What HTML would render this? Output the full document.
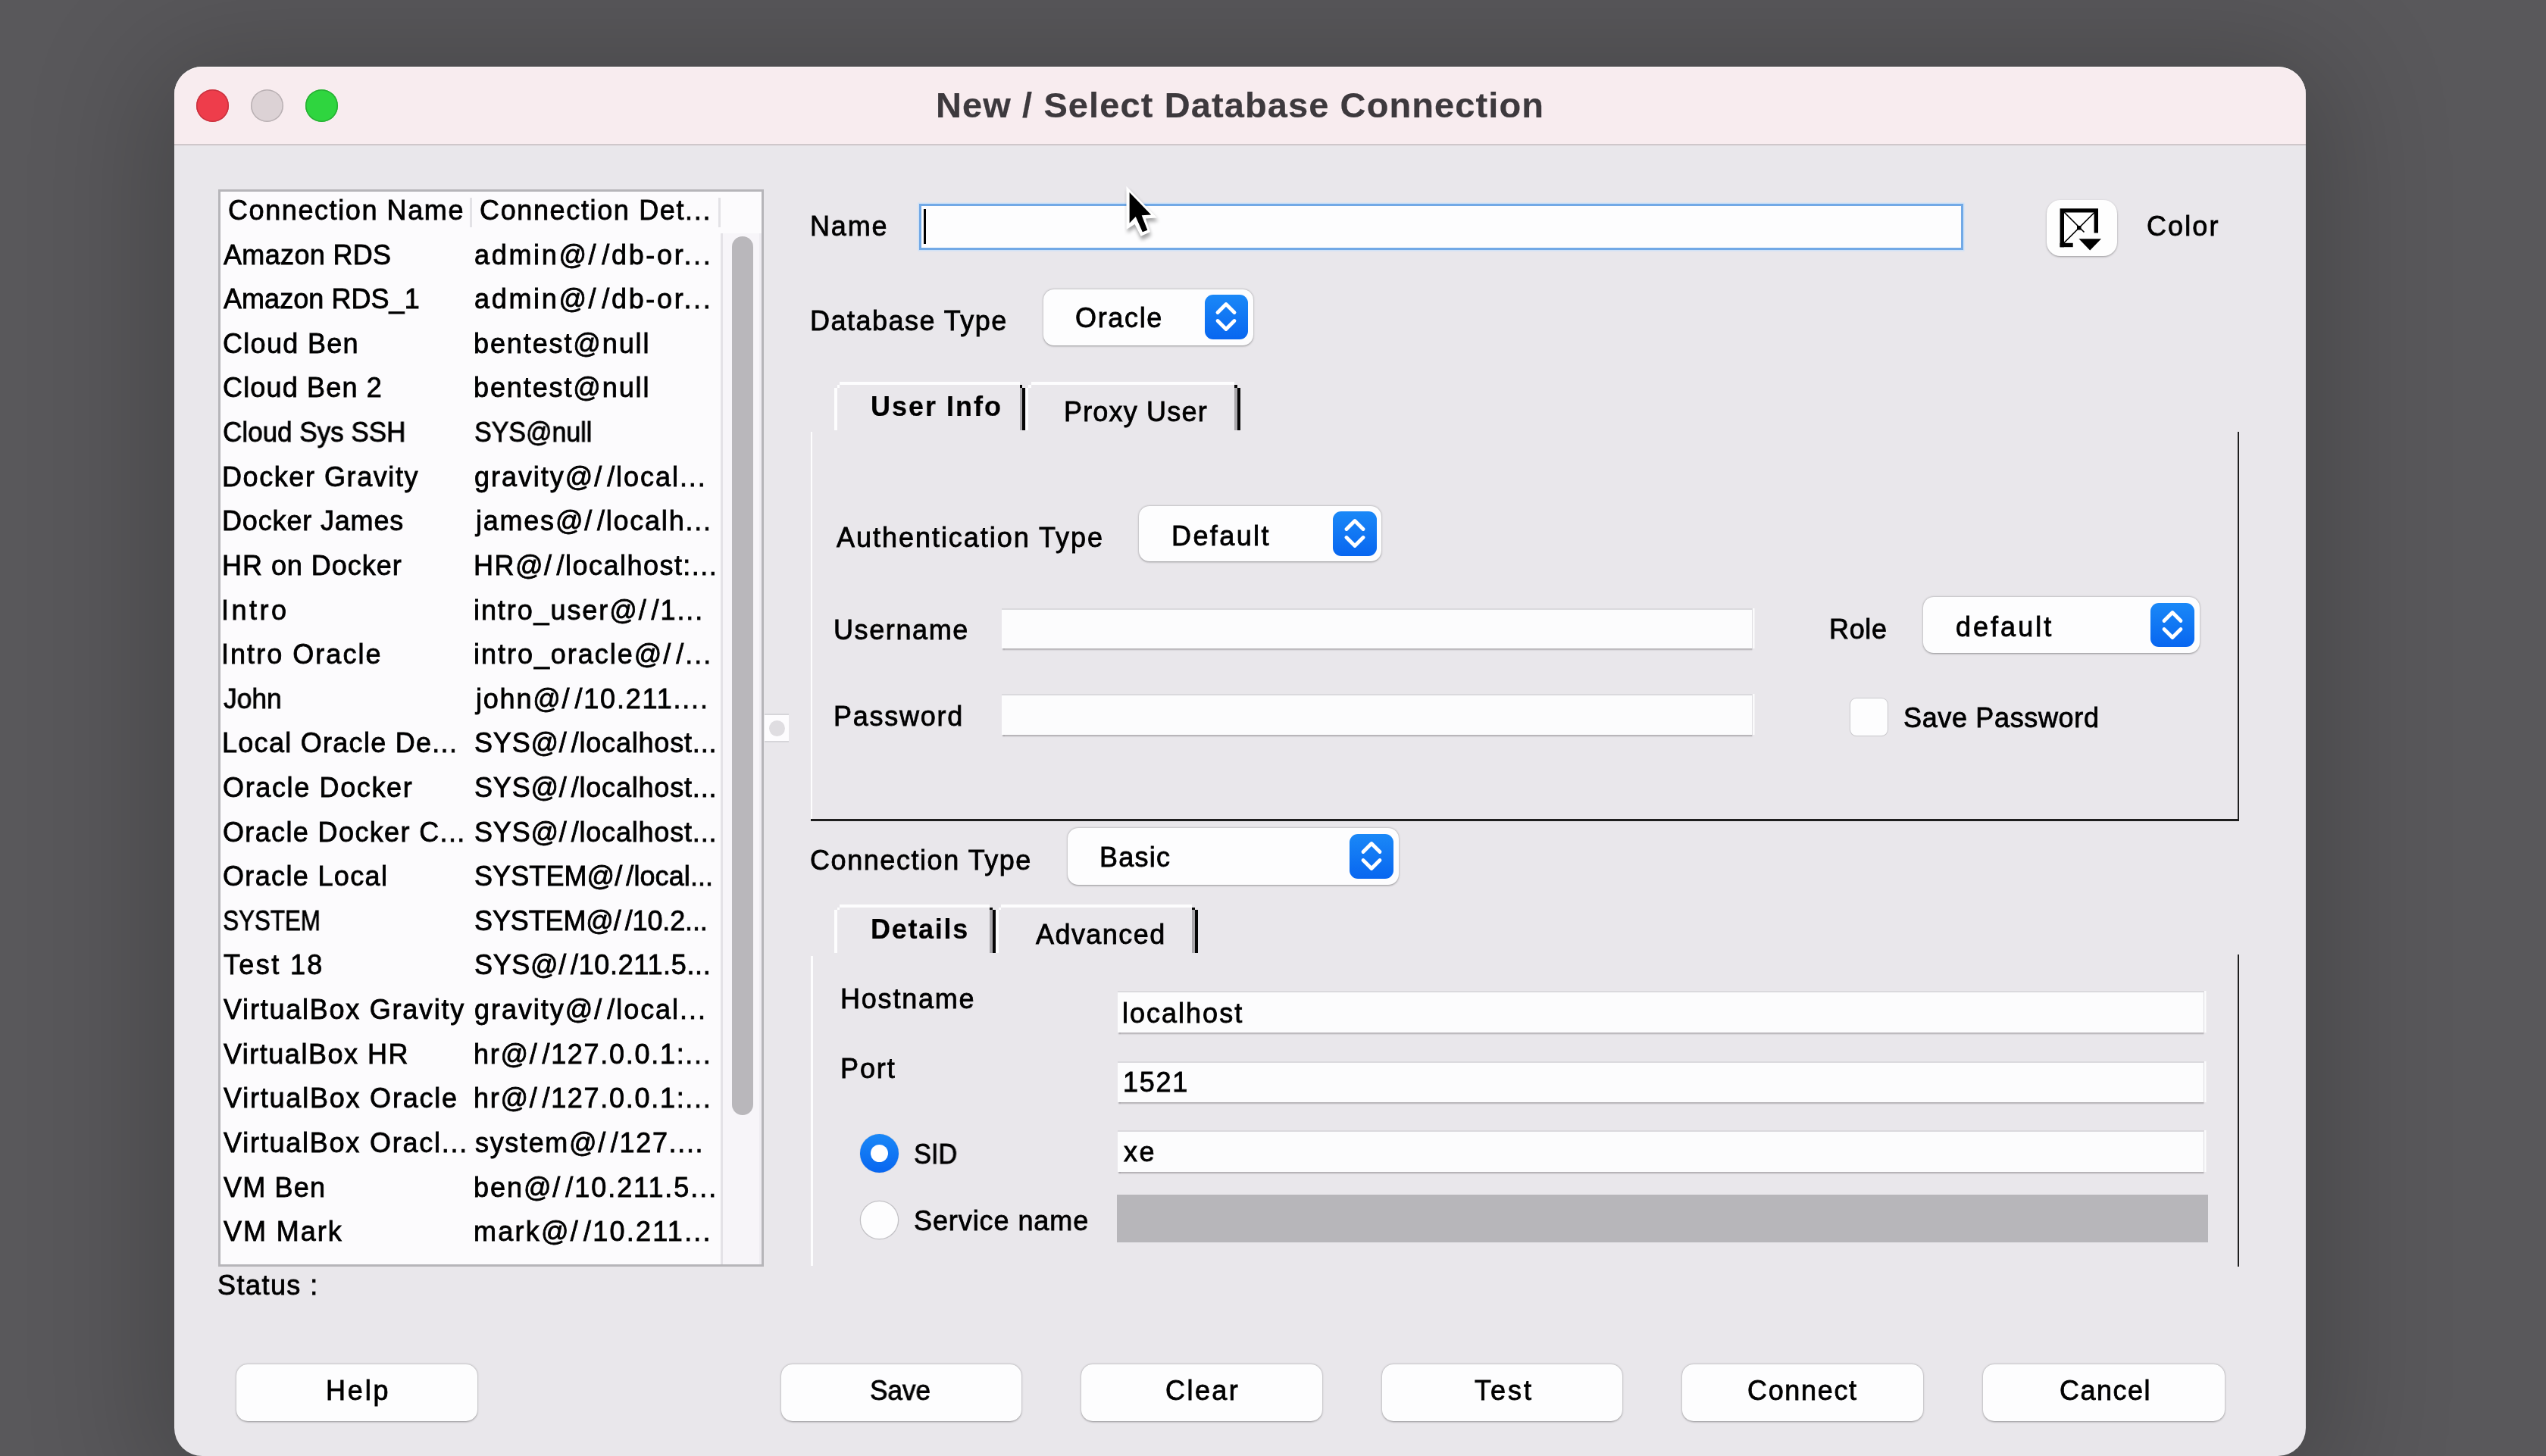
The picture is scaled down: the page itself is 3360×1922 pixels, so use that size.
<!DOCTYPE html>
<html><head><meta charset="utf-8"><style>
html,body{margin:0;padding:0;}
body{width:3360px;height:1922px;overflow:hidden;position:relative;background:#4e4d50;font-family:"Liberation Sans",sans-serif;}
.a{position:absolute;}
.t{position:absolute;white-space:nowrap;line-height:1;color:#000;-webkit-font-smoothing:antialiased;will-change:transform;-webkit-text-stroke:0.8px currentColor;}
</style></head><body>
<div class="a" style="left:0;top:0;width:3360px;height:1922px;background:#59585b;"></div>
<div class="a" style="left:230.0px;top:88.0px;width:2813.0px;height:1834.0px;background:#e9e7eb;border-radius:37px;overflow:hidden;box-shadow:0 20px 160px 40px rgba(0,0,0,0.2);"></div>
<div class="a" style="left:230px;top:88px;width:2813px;height:103px;background:#f8ecef;border-radius:37px 37px 0 0;border-top:1px solid #fdf8f9;box-sizing:border-box;"></div>
<div class="a" style="left:230.0px;top:190.0px;width:2813.0px;height:2.0px;background:#cfc7ca;"></div>
<div class="a" style="left:258.5px;top:117.5px;width:43.0px;height:43.0px;background:#ee3d4b;border-radius:50%;box-shadow:inset 0 0 0 1.5px #c7323e;"></div>
<div class="a" style="left:330.5px;top:117.5px;width:43.0px;height:43.0px;background:#dcd2d5;border-radius:50%;box-shadow:inset 0 0 0 1.5px #b9b0b3;"></div>
<div class="a" style="left:402.5px;top:117.5px;width:43.0px;height:43.0px;background:#2fd53f;border-radius:50%;box-shadow:inset 0 0 0 1.5px #27ad33;"></div>
<div class="t" style="left:1234.9px;top:115.2px;font-size:47px;font-weight:bold;-webkit-text-stroke:0.2px currentColor;letter-spacing:1.10px;color:#3d393d;">New / Select Database Connection</div>
<div class="a" style="left:288.0px;top:250.0px;width:720.0px;height:1422.0px;background:#fcfbfd;border:3px solid #b6b5b9;box-sizing:border-box;"></div>
<div class="a" style="left:620.0px;top:261.0px;width:3.0px;height:39.0px;background:#e3e2e6;"></div>
<div class="a" style="left:947.5px;top:261.0px;width:3.0px;height:39.0px;background:#e3e2e6;"></div>
<div class="t" style="left:301.2px;top:259.5px;font-size:36px;letter-spacing:1.59px;">Connection Name</div>
<div class="t" style="left:632.8px;top:259.5px;font-size:36px;letter-spacing:1.64px;">Connection Det...</div>
<div class="t" style="left:295.4px;top:318.5px;font-size:36px;letter-spacing:0.34px;">Amazon RDS</div>
<div class="t" style="left:626.0px;top:318.5px;font-size:36px;letter-spacing:2.67px;">admin@/<span style="margin-left:5.0px">/</span>db-or...</div>
<div class="t" style="left:295.4px;top:377.1px;font-size:36px;letter-spacing:0.05px;">Amazon RDS_1</div>
<div class="t" style="left:626.0px;top:377.1px;font-size:36px;letter-spacing:2.67px;">admin@/<span style="margin-left:5.0px">/</span>db-or...</div>
<div class="t" style="left:293.7px;top:435.8px;font-size:36px;letter-spacing:1.31px;">Cloud Ben</div>
<div class="t" style="left:625.2px;top:435.8px;font-size:36px;letter-spacing:1.89px;">bentest@null</div>
<div class="t" style="left:293.7px;top:494.4px;font-size:36px;letter-spacing:1.17px;">Cloud Ben 2</div>
<div class="t" style="left:625.2px;top:494.4px;font-size:36px;letter-spacing:1.89px;">bentest@null</div>
<div class="t" style="left:293.7px;top:553.0px;font-size:36px;transform:scaleX(0.9733);transform-origin:1.8px 0;">Cloud Sys SSH</div>
<div class="t" style="left:625.9px;top:553.0px;font-size:36px;transform:scaleX(0.9433);transform-origin:1.6px 0;">SYS@null</div>
<div class="t" style="left:292.5px;top:611.6px;font-size:36px;letter-spacing:1.57px;">Docker Gravity</div>
<div class="t" style="left:626.0px;top:611.6px;font-size:36px;letter-spacing:1.95px;">gravity@/<span style="margin-left:5.0px">/</span>local...</div>
<div class="t" style="left:292.5px;top:670.2px;font-size:36px;letter-spacing:0.84px;">Docker James</div>
<div class="t" style="left:628.4px;top:670.2px;font-size:36px;letter-spacing:1.77px;">james@/<span style="margin-left:5.0px">/</span>localh...</div>
<div class="t" style="left:292.5px;top:728.9px;font-size:36px;letter-spacing:0.96px;">HR on Docker</div>
<div class="t" style="left:624.5px;top:728.9px;font-size:36px;letter-spacing:1.48px;">HR@/<span style="margin-left:5.0px">/</span>localhost:...</div>
<div class="t" style="left:292.2px;top:787.5px;font-size:36px;letter-spacing:3.50px;">Intro</div>
<div class="t" style="left:625.1px;top:787.5px;font-size:36px;letter-spacing:1.91px;">intro_user@/<span style="margin-left:5.0px">/</span>1...</div>
<div class="t" style="left:292.2px;top:846.1px;font-size:36px;letter-spacing:2.04px;">Intro Oracle</div>
<div class="t" style="left:625.1px;top:846.1px;font-size:36px;letter-spacing:1.97px;">intro_oracle@/<span style="margin-left:5.0px">/</span>...</div>
<div class="t" style="left:294.9px;top:904.7px;font-size:36px;transform:scaleX(0.9827);transform-origin:0.6px 0;">John</div>
<div class="t" style="left:628.4px;top:904.7px;font-size:36px;letter-spacing:1.80px;">john@/<span style="margin-left:5.0px">/</span>10.211....</div>
<div class="t" style="left:292.5px;top:963.3px;font-size:36px;letter-spacing:1.28px;">Local Oracle De...</div>
<div class="t" style="left:625.9px;top:963.3px;font-size:36px;letter-spacing:0.81px;">SYS@/<span style="margin-left:5.0px">/</span>localhost...</div>
<div class="t" style="left:293.8px;top:1022.0px;font-size:36px;letter-spacing:1.64px;">Oracle Docker</div>
<div class="t" style="left:625.9px;top:1022.0px;font-size:36px;letter-spacing:0.81px;">SYS@/<span style="margin-left:5.0px">/</span>localhost...</div>
<div class="t" style="left:293.8px;top:1080.6px;font-size:36px;letter-spacing:1.37px;">Oracle Docker C...</div>
<div class="t" style="left:625.9px;top:1080.6px;font-size:36px;letter-spacing:0.81px;">SYS@/<span style="margin-left:5.0px">/</span>localhost...</div>
<div class="t" style="left:293.8px;top:1139.2px;font-size:36px;letter-spacing:1.35px;">Oracle Local</div>
<div class="t" style="left:625.9px;top:1139.2px;font-size:36px;letter-spacing:0.09px;">SYSTEM@/<span style="margin-left:5.0px">/</span>local...</div>
<div class="t" style="left:293.9px;top:1197.8px;font-size:36px;transform:scaleX(0.8696);transform-origin:1.6px 0;">SYSTEM</div>
<div class="t" style="left:625.9px;top:1197.8px;font-size:36px;letter-spacing:-0.12px;">SYSTEM@/<span style="margin-left:5.0px">/</span>10.2...</div>
<div class="t" style="left:294.7px;top:1256.4px;font-size:36px;letter-spacing:2.37px;">Test 18</div>
<div class="t" style="left:625.9px;top:1256.4px;font-size:36px;letter-spacing:0.67px;">SYS@/<span style="margin-left:5.0px">/</span>10.211.5...</div>
<div class="t" style="left:295.3px;top:1315.1px;font-size:36px;letter-spacing:1.76px;">VirtualBox Gravity</div>
<div class="t" style="left:626.0px;top:1315.1px;font-size:36px;letter-spacing:1.96px;">gravity@/<span style="margin-left:5.0px">/</span>local...</div>
<div class="t" style="left:295.3px;top:1373.7px;font-size:36px;letter-spacing:1.50px;">VirtualBox HR</div>
<div class="t" style="left:625.0px;top:1373.7px;font-size:36px;letter-spacing:1.71px;">hr@/<span style="margin-left:5.0px">/</span>127.0.0.1:...</div>
<div class="t" style="left:295.3px;top:1432.3px;font-size:36px;letter-spacing:1.79px;">VirtualBox Oracle</div>
<div class="t" style="left:625.0px;top:1432.3px;font-size:36px;letter-spacing:1.71px;">hr@/<span style="margin-left:5.0px">/</span>127.0.0.1:...</div>
<div class="t" style="left:295.3px;top:1490.9px;font-size:36px;letter-spacing:1.77px;">VirtualBox Oracl...</div>
<div class="t" style="left:626.5px;top:1490.9px;font-size:36px;letter-spacing:1.66px;">system@/<span style="margin-left:5.0px">/</span>127....</div>
<div class="t" style="left:295.3px;top:1549.5px;font-size:36px;letter-spacing:1.18px;">VM Ben</div>
<div class="t" style="left:625.2px;top:1549.5px;font-size:36px;letter-spacing:1.94px;">ben@/<span style="margin-left:5.0px">/</span>10.211.5...</div>
<div class="t" style="left:295.3px;top:1608.2px;font-size:36px;letter-spacing:1.95px;">VM Mark</div>
<div class="t" style="left:625.1px;top:1608.2px;font-size:36px;letter-spacing:2.24px;">mark@/<span style="margin-left:5.0px">/</span>10.211...</div>
<div class="a" style="left:951.0px;top:308.0px;width:54.0px;height:1361.0px;background:#f7f5f9;border-left:3px solid #e4e2e7;border-right:3px solid #efedf2;box-sizing:border-box;"></div>
<div class="a" style="left:965.5px;top:311.5px;width:28.5px;height:1160.0px;background:#b9b7bb;border-radius:15px;"></div>
<div class="a" style="left:1008.5px;top:942.0px;width:32.5px;height:38.0px;background:#fdfcfe;border-top:2.5px solid #d6d5d9;border-bottom:2.5px solid #d6d5d9;box-sizing:border-box;"></div>
<div class="a" style="left:1014.5px;top:950.5px;width:21.0px;height:21.0px;background:#dfdde1;border-radius:50%;"></div>
<div class="t" style="left:287.0px;top:1678.5px;font-size:36px;letter-spacing:1.46px;">Status :</div>
<div class="t" style="left:1068.6px;top:281.1px;font-size:36px;letter-spacing:1.87px;">Name</div>
<div class="a" style="left:1212.5px;top:268.5px;width:1378.5px;height:61.0px;background:#fdfdfe;border:3px solid #72a9e6;box-shadow:0 0 0 1.5px #cfe2f7;box-sizing:border-box;"></div>
<div class="a" style="left:1219.0px;top:276.0px;width:3.0px;height:46.0px;background:#000;"></div>
<div class="a" style="left:2700.5px;top:263.5px;width:93.5px;height:74.0px;background:#fefefe;border-radius:18px;box-shadow:0 1px 2.5px rgba(0,0,0,0.35);"></div>
<svg class="a" style="left:2710px;top:270px" width="70" height="66" viewBox="2710 270 70 66">
<path d="M2721.3 326.2 V277.9 H2766.3 V307.6" fill="none" stroke="#000" stroke-width="5.4"/>
<path d="M2718.6 323.5 H2735.7" stroke="#000" stroke-width="5.4"/>
<path d="M2723.5 279.5 L2750.5 306.5 M2765 279.5 L2723.5 321" stroke="#000" stroke-width="1.7"/>
<rect x="2741" y="298" width="5.5" height="5.5" fill="#000"/>
<path d="M2743.5 315.2 H2773 L2758.2 330.5 Z" fill="#000"/>
</svg>
<div class="t" style="left:2833.0px;top:281.0px;font-size:36px;letter-spacing:2.10px;">Color</div>
<div class="t" style="left:1068.6px;top:406.1px;font-size:36px;letter-spacing:1.49px;">Database Type</div>
<div class="a" style="left:1376.5px;top:381.5px;width:277.5px;height:74.0px;background:#fdfdfe;border-radius:14px;box-shadow:0 0.5px 2.5px rgba(0,0,0,0.38);"></div>
<div class="a" style="left:1589.5px;top:388.5px;width:57.5px;height:59.0px;background:linear-gradient(#1a88f7,#0866f0);border-radius:11px;"></div>
<svg class="a" style="left:1603.2px;top:396.0px" width="30" height="44" viewBox="0 0 30 44"><path d="M4 16.5 L15 5.5 L26 16.5 M4 27.5 L15 38.5 L26 27.5" fill="none" stroke="#fff" stroke-width="4.8" stroke-linecap="round" stroke-linejoin="round"/></svg>
<div class="t" style="left:1419.3px;top:401.7px;font-size:36px;letter-spacing:1.66px;">Oracle</div>
<div class="a" style="left:1100.5px;top:511.7px;width:4.0px;height:56.8px;background:#fdfdfe;"></div>
<div class="a" style="left:1104.5px;top:508.1px;width:3.5px;height:3.6px;background:#fdfdfe;"></div>
<div class="a" style="left:1108.0px;top:504.3px;width:237.8px;height:4.0px;background:#fdfdfe;"></div>
<div class="a" style="left:1345.8px;top:508.1px;width:3.6px;height:3.6px;background:#0a0a0a;"></div>
<div class="a" style="left:1345.8px;top:511.7px;width:3.6px;height:56.8px;background:#a9a7ab;"></div>
<div class="a" style="left:1349.4px;top:511.7px;width:3.8px;height:56.8px;background:#050505;"></div>
<div class="a" style="left:1353.5px;top:511.7px;width:3.7px;height:56.8px;background:#fdfdfe;"></div>
<div class="a" style="left:1357.2px;top:508.1px;width:3.5px;height:3.6px;background:#fdfdfe;"></div>
<div class="a" style="left:1360.7px;top:504.3px;width:268.7px;height:4.0px;background:#fdfdfe;"></div>
<div class="a" style="left:1629.4px;top:508.1px;width:3.6px;height:3.6px;background:#0a0a0a;"></div>
<div class="a" style="left:1629.4px;top:511.7px;width:3.6px;height:56.8px;background:#a9a7ab;"></div>
<div class="a" style="left:1633.0px;top:511.7px;width:3.8px;height:56.8px;background:#050505;"></div>
<div class="t" style="left:1148.6px;top:518.9px;font-size:36px;font-weight:bold;-webkit-text-stroke:0.2px currentColor;letter-spacing:2.01px;">User Info</div>
<div class="t" style="left:1404.4px;top:526.1px;font-size:36px;letter-spacing:1.18px;">Proxy User</div>
<div class="a" style="left:1069.5px;top:570.0px;width:2.5px;height:512.0px;background:#fdfdfe;"></div>
<div class="a" style="left:1069.5px;top:1081.0px;width:1885.5px;height:2.5px;background:#1e1e1e;"></div>
<div class="a" style="left:2952.5px;top:570.0px;width:2.5px;height:513.5px;background:#1e1e1e;"></div>
<div class="t" style="left:1103.5px;top:691.5px;font-size:36px;letter-spacing:1.97px;">Authentication Type</div>
<div class="a" style="left:1503.0px;top:667.5px;width:320.0px;height:73.5px;background:#fdfdfe;border-radius:14px;box-shadow:0 0.5px 2.5px rgba(0,0,0,0.38);"></div>
<div class="a" style="left:1759.0px;top:674.5px;width:58.0px;height:59.0px;background:linear-gradient(#1a88f7,#0866f0);border-radius:11px;"></div>
<svg class="a" style="left:1773.0px;top:682.0px" width="30" height="44" viewBox="0 0 30 44"><path d="M4 16.5 L15 5.5 L26 16.5 M4 27.5 L15 38.5 L26 27.5" fill="none" stroke="#fff" stroke-width="4.8" stroke-linecap="round" stroke-linejoin="round"/></svg>
<div class="t" style="left:1546.0px;top:689.5px;font-size:36px;letter-spacing:2.40px;">Default</div>
<div class="t" style="left:1100.2px;top:813.5px;font-size:36px;letter-spacing:1.60px;">Username</div>
<div class="a" style="left:1321.5px;top:803.0px;width:991.0px;height:52.5px;background:#fcfcfd;border-top:2px solid #dad9dd;border-right:1.5px solid #dedde1;box-shadow:0 2.5px 1.5px -0.5px rgba(60,58,64,0.38), 2.5px 0 0 #fbfbfc;box-sizing:border-box;"></div>
<div class="t" style="left:1100.0px;top:927.9px;font-size:36px;letter-spacing:1.76px;">Password</div>
<div class="a" style="left:1321.5px;top:916.0px;width:991.0px;height:53.5px;background:#fcfcfd;border-top:2px solid #dad9dd;border-right:1.5px solid #dedde1;box-shadow:0 2.5px 1.5px -0.5px rgba(60,58,64,0.38), 2.5px 0 0 #fbfbfc;box-sizing:border-box;"></div>
<div class="t" style="left:2413.7px;top:813.0px;font-size:36px;letter-spacing:0.63px;">Role</div>
<div class="a" style="left:2538.0px;top:788.0px;width:364.5px;height:74.0px;background:#fdfdfe;border-radius:14px;box-shadow:0 0.5px 2.5px rgba(0,0,0,0.38);"></div>
<div class="a" style="left:2838.0px;top:795.5px;width:57.5px;height:58.5px;background:linear-gradient(#1a88f7,#0866f0);border-radius:11px;"></div>
<svg class="a" style="left:2851.8px;top:802.8px" width="30" height="44" viewBox="0 0 30 44"><path d="M4 16.5 L15 5.5 L26 16.5 M4 27.5 L15 38.5 L26 27.5" fill="none" stroke="#fff" stroke-width="4.8" stroke-linecap="round" stroke-linejoin="round"/></svg>
<div class="t" style="left:2580.5px;top:809.5px;font-size:36px;letter-spacing:3.02px;">default</div>
<div class="a" style="left:2441.5px;top:921.5px;width:49.0px;height:49.5px;background:#fdfdfe;border-radius:8px;box-shadow:0 0 0 1px #c9c8cc, 0 1px 1px rgba(0,0,0,0.1);"></div>
<div class="t" style="left:2512.4px;top:929.7px;font-size:36px;letter-spacing:0.65px;">Save Password</div>
<div class="t" style="left:1069.2px;top:1118.0px;font-size:36px;letter-spacing:1.56px;">Connection Type</div>
<div class="a" style="left:1409.0px;top:1093.0px;width:436.5px;height:74.5px;background:#fdfdfe;border-radius:14px;box-shadow:0 0.5px 2.5px rgba(0,0,0,0.38);"></div>
<div class="a" style="left:1780.5px;top:1100.5px;width:58.5px;height:59.0px;background:linear-gradient(#1a88f7,#0866f0);border-radius:11px;"></div>
<svg class="a" style="left:1794.8px;top:1108.0px" width="30" height="44" viewBox="0 0 30 44"><path d="M4 16.5 L15 5.5 L26 16.5 M4 27.5 L15 38.5 L26 27.5" fill="none" stroke="#fff" stroke-width="4.8" stroke-linecap="round" stroke-linejoin="round"/></svg>
<div class="t" style="left:1450.8px;top:1113.9px;font-size:36px;letter-spacing:1.25px;">Basic</div>
<div class="a" style="left:1100.5px;top:1201.3px;width:4.0px;height:56.9px;background:#fdfdfe;"></div>
<div class="a" style="left:1104.5px;top:1197.7px;width:3.5px;height:3.6px;background:#fdfdfe;"></div>
<div class="a" style="left:1108.0px;top:1193.9px;width:198.4px;height:4.0px;background:#fdfdfe;"></div>
<div class="a" style="left:1306.4px;top:1197.7px;width:3.6px;height:3.6px;background:#0a0a0a;"></div>
<div class="a" style="left:1306.4px;top:1201.3px;width:3.6px;height:56.9px;background:#a9a7ab;"></div>
<div class="a" style="left:1310.0px;top:1201.3px;width:3.8px;height:56.9px;background:#050505;"></div>
<div class="a" style="left:1314.1px;top:1201.3px;width:3.7px;height:56.9px;background:#fdfdfe;"></div>
<div class="a" style="left:1317.8px;top:1197.7px;width:3.5px;height:3.6px;background:#fdfdfe;"></div>
<div class="a" style="left:1321.3px;top:1193.9px;width:251.9px;height:4.0px;background:#fdfdfe;"></div>
<div class="a" style="left:1573.2px;top:1197.7px;width:3.6px;height:3.6px;background:#0a0a0a;"></div>
<div class="a" style="left:1573.2px;top:1201.3px;width:3.6px;height:56.9px;background:#a9a7ab;"></div>
<div class="a" style="left:1576.8px;top:1201.3px;width:3.8px;height:56.9px;background:#050505;"></div>
<div class="t" style="left:1149.1px;top:1208.5px;font-size:36px;font-weight:bold;-webkit-text-stroke:0.2px currentColor;letter-spacing:1.70px;">Details</div>
<div class="t" style="left:1366.9px;top:1216.3px;font-size:36px;letter-spacing:1.44px;">Advanced</div>
<div class="a" style="left:1070.0px;top:1262.0px;width:2.5px;height:409.0px;background:#fdfdfe;"></div>
<div class="a" style="left:2952.5px;top:1259.5px;width:2.5px;height:412.5px;background:#1e1e1e;"></div>
<div class="t" style="left:1108.7px;top:1300.7px;font-size:36px;letter-spacing:1.79px;">Hostname</div>
<div class="a" style="left:1475.0px;top:1308.0px;width:1433.5px;height:55.0px;background:#fcfcfd;border-top:2px solid #dad9dd;border-right:1.5px solid #dedde1;box-shadow:0 2.5px 1.5px -0.5px rgba(60,58,64,0.38), 2.5px 0 0 #fbfbfc;box-sizing:border-box;"></div>
<div class="t" style="left:1480.6px;top:1319.5px;font-size:36px;letter-spacing:2.01px;">localhost</div>
<div class="t" style="left:1108.7px;top:1393.1px;font-size:36px;letter-spacing:1.87px;">Port</div>
<div class="a" style="left:1475.0px;top:1400.5px;width:1433.5px;height:54.0px;background:#fcfcfd;border-top:2px solid #dad9dd;border-right:1.5px solid #dedde1;box-shadow:0 2.5px 1.5px -0.5px rgba(60,58,64,0.38), 2.5px 0 0 #fbfbfc;box-sizing:border-box;"></div>
<div class="t" style="left:1482.3px;top:1411.2px;font-size:36px;letter-spacing:1.70px;">1521</div>
<div class="a" style="left:1135.0px;top:1497.0px;width:50.5px;height:50.5px;background:linear-gradient(#1a88f7,#0866f0);border-radius:50%;box-shadow:0 0 1px rgba(0,0,0,0.3);"></div>
<div class="a" style="left:1148.5px;top:1510.5px;width:23.5px;height:23.5px;background:#fff;border-radius:50%;"></div>
<div class="t" style="left:1206.4px;top:1505.5px;font-size:36px;transform:scaleX(0.9524);transform-origin:1.6px 0;">SID</div>
<div class="a" style="left:1475.0px;top:1491.5px;width:1433.5px;height:55.0px;background:#fcfcfd;border-top:2px solid #dad9dd;border-right:1.5px solid #dedde1;box-shadow:0 2.5px 1.5px -0.5px rgba(60,58,64,0.38), 2.5px 0 0 #fbfbfc;box-sizing:border-box;"></div>
<div class="t" style="left:1482.6px;top:1502.7px;font-size:36px;letter-spacing:2.60px;">xe</div>
<div class="a" style="left:1136.0px;top:1585.5px;width:48.5px;height:49.0px;background:#fdfdfe;border-radius:50%;box-shadow:0 0 0 1.3px #c2c1c5, 0 1px 1px rgba(0,0,0,0.1);"></div>
<div class="t" style="left:1206.4px;top:1594.3px;font-size:36px;letter-spacing:0.92px;">Service name</div>
<div class="a" style="left:1474.0px;top:1577.0px;width:1439.5px;height:63.0px;background:#b7b6ba;"></div>
<div class="a" style="left:312.0px;top:1800.5px;width:318.0px;height:75.0px;background:#fdfdfe;border-radius:15px;box-shadow:0 0.5px 2.5px rgba(0,0,0,0.38);"></div>
<div class="t" style="left:430.0px;top:1818.3px;font-size:36px;letter-spacing:2.83px;">Help</div>
<div class="a" style="left:1030.5px;top:1800.5px;width:317.5px;height:75.0px;background:#fdfdfe;border-radius:15px;box-shadow:0 0.5px 2.5px rgba(0,0,0,0.38);"></div>
<div class="t" style="left:1148.1px;top:1818.3px;font-size:36px;transform:scaleX(0.9746);transform-origin:1.6px 0;">Save</div>
<div class="a" style="left:1427.0px;top:1800.5px;width:318.0px;height:75.0px;background:#fdfdfe;border-radius:15px;box-shadow:0 0.5px 2.5px rgba(0,0,0,0.38);"></div>
<div class="t" style="left:1538.1px;top:1818.3px;font-size:36px;letter-spacing:2.45px;">Clear</div>
<div class="a" style="left:1823.5px;top:1800.5px;width:317.5px;height:75.0px;background:#fdfdfe;border-radius:15px;box-shadow:0 0.5px 2.5px rgba(0,0,0,0.38);"></div>
<div class="t" style="left:1945.9px;top:1818.3px;font-size:36px;letter-spacing:2.97px;">Test</div>
<div class="a" style="left:2220.0px;top:1800.5px;width:318.0px;height:75.0px;background:#fdfdfe;border-radius:15px;box-shadow:0 0.5px 2.5px rgba(0,0,0,0.38);"></div>
<div class="t" style="left:2306.2px;top:1818.3px;font-size:36px;letter-spacing:1.67px;">Connect</div>
<div class="a" style="left:2617.0px;top:1800.5px;width:318.5px;height:75.0px;background:#fdfdfe;border-radius:15px;box-shadow:0 0.5px 2.5px rgba(0,0,0,0.38);"></div>
<div class="t" style="left:2718.2px;top:1818.3px;font-size:36px;letter-spacing:1.48px;">Cancel</div>
<svg class="a" style="left:1470px;top:235px" width="80" height="95" viewBox="1470 235 80 95">
<defs><filter id="sh" x="-50%" y="-50%" width="200%" height="200%"><feGaussianBlur stdDeviation="2.5"/></filter></defs>
<path d="M1487 246 L1487 303.5 L1497.5 296 L1505.7 313 L1518 307 L1511.5 289 L1527.5 288 Z" fill="#000" opacity="0.35" filter="url(#sh)" transform="translate(1,4)"/>
<path d="M1486.5 245.8 L1486.5 303 L1497.5 296 L1505.7 311.7 L1518 306.2 L1511.9 288.5 L1527 287.5 Z" fill="#fff"/>
<path d="M1490.6 254 L1490.6 294.6 L1498.8 286 L1507.8 306.2 L1514.3 303.8 L1506.7 284.3 L1519.1 283.6 Z" fill="#000"/>
</svg>
</body></html>
